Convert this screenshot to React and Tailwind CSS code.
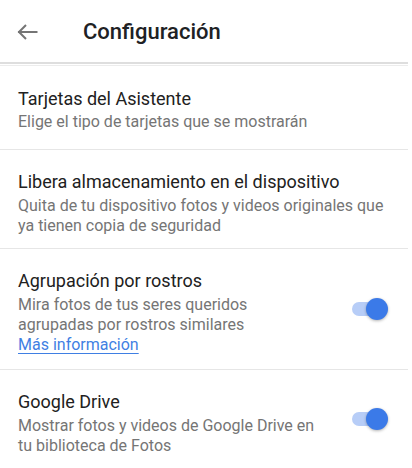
import React from "react";

function Toggle() {
  return (
    <div className="relative w-[36px] h-[22px] shrink-0">
      <div className="absolute left-0 top-[4px] w-[34px] h-[14px] rounded-full bg-[#b7cdf7]" />
      <div className="absolute right-0 top-0 w-[22px] h-[22px] rounded-full bg-[#3b7ae8] shadow-[0_1px_3px_rgba(0,0,0,0.3)]" />
    </div>
  );
}

function Divider() {
  return <div className="h-px bg-[#e6e6e6] mr-[4px]" />;
}

export default function App() {
  return (
    <div className="w-[412px] h-[468px] overflow-hidden bg-white" style={{ fontFamily: "Roboto, 'Noto Sans', sans-serif" }}>
      <div className="h-[62px] flex items-center">
        <svg width="22" height="18" viewBox="0 0 22 18" className="ml-[16px] mt-[1px]" fill="none" stroke="#757575" strokeWidth="2" strokeLinecap="square">
          <path d="M3 9H20.5" />
          <path d="M10 2L3 9L10 16" strokeLinecap="butt" />
        </svg>
        <div className="ml-[45px] pt-[2px] text-[22px] leading-[28px] font-medium text-[#202124]">Configuración</div>
      </div>
      <div className="h-[2px] bg-[#dedede] mr-[4px]" />
      <div className="h-px mt-[1px] bg-[#ececec] mr-[4px]" />

      <div className="px-[18px] pt-[21px] pb-[17px]">
        <div className="text-[18px] leading-[24px] text-[#212121]">Tarjetas del Asistente</div>
        <div className="mt-[1px] text-[16px] leading-[20px] text-[#757575]">Elige el tipo de tarjetas que se mostrarán</div>
      </div>
      <Divider />

      <div className="px-[18px] pt-[20px] pb-[12px]">
        <div className="text-[18px] leading-[24px] text-[#212121]">Libera almacenamiento en el dispositivo</div>
        <div className="mt-[2px] text-[16px] leading-[20px] text-[#757575] whitespace-nowrap">
          Quita de tu dispositivo fotos y videos originales que
          <br />
          ya tienen copia de seguridad
        </div>
      </div>
      <Divider />

      <div className="flex items-center pl-[18px] pr-[24px]">
        <div className="flex-1 pt-[20px] pb-[14px]">
          <div className="text-[18px] leading-[24px] text-[#212121]">Agrupación por rostros</div>
          <div className="mt-[2px] text-[16px] leading-[20px] text-[#757575] whitespace-nowrap">
            Mira fotos de tus seres queridos
            <br />
            agrupadas por rostros similares
          </div>
          <div className="text-[16px] leading-[20px] text-[#3f7fe3] underline underline-offset-[3px] decoration-[#3f7fe3]">Más información</div>
        </div>
        <Toggle />
      </div>
      <Divider />

      <div className="flex items-center pl-[18px] pr-[24px]">
        <div className="flex-1 pt-[20px] pb-[12px]">
          <div className="text-[18px] leading-[24px] text-[#212121]">Google Drive</div>
          <div className="mt-[2px] text-[16px] leading-[20px] text-[#757575] whitespace-nowrap">
            Mostrar fotos y videos de Google Drive en
            <br />
            tu biblioteca de Fotos
          </div>
        </div>
        <Toggle />
      </div>
    </div>
  );
}
